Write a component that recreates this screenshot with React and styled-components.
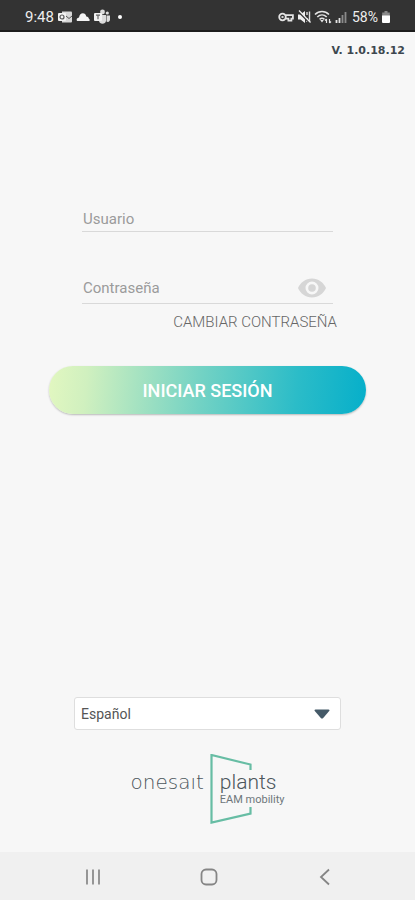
import React, { useState } from 'react';
import styled, { createGlobalStyle } from 'styled-components';

const App = () => {
  const [visible, setVisible] = useState(false);

  return (
    <>
      <GlobalStyle />
      <Screen>
        <StatusBar>
          <StatusGroup>
            <Clock>9:48</Clock>
            <OutlookIcon />
            <CloudIcon />
            <TeamsIcon />
            <Dot />
          </StatusGroup>
          <StatusGroup $tight>
            <KeyIcon />
            <MuteIcon />
            <WifiIcon />
            <SignalIcon />
            <Battery>58%</Battery>
            <BatteryIcon />
          </StatusGroup>
        </StatusBar>

        <Version>V. 1.0.18.12</Version>

        <LoginForm onSubmit={(e) => e.preventDefault()}>
          <Fields>
            <Field>
              <FieldInput type='text' placeholder='Usuario' aria-label='Usuario' />
            </Field>
            <Field $password>
              <FieldInput type={visible ? 'text' : 'password'} placeholder='Contraseña' aria-label='Contraseña' />
              <EyeButton type='button' aria-label='Mostrar contraseña' onClick={() => setVisible(!visible)}>
                <EyeIcon />
              </EyeButton>
            </Field>
          </Fields>
          <ChangeLink href='#'>CAMBIAR CONTRASEÑA</ChangeLink>
          <LoginButton type='submit'>INICIAR SESIÓN</LoginButton>
        </LoginForm>

        <Footer>
          <LanguageBox>
            <LanguageSelect aria-label='Idioma' defaultValue='es'>
              <option value='es'>Español</option>
              <option value='en'>English</option>
            </LanguageSelect>
            <ArrowIcon />
          </LanguageBox>
          <Logo />
        </Footer>

        <NavBar>
          <NavButton type='button' aria-label='Recientes'>
            <svg width='18' height='18' viewBox='0 0 18 18' stroke='#8c8c8c' strokeWidth='1.8'>
              <path d='M3 1.5v15M9 1.5v15M15 1.5v15' />
            </svg>
          </NavButton>
          <NavButton type='button' aria-label='Inicio'>
            <svg width='18' height='18' viewBox='0 0 18 18' fill='none' stroke='#858585' strokeWidth='1.8'>
              <rect x='1.5' y='1.5' width='15' height='15' rx='4.5' />
            </svg>
          </NavButton>
          <NavButton type='button' aria-label='Atrás'>
            <svg width='18' height='18' viewBox='0 0 18 18' fill='none' stroke='#858585' strokeWidth='1.8'>
              <path d='M13 1.5L5 9l8 7.5' />
            </svg>
          </NavButton>
        </NavBar>
      </Screen>
    </>
  );
};

export default App;

const OutlookIcon = () => (
  <svg width='14' height='14' viewBox='0 0 14 14'>
    <path d='M4 1.5h9a1 1 0 0 1 1 1v9a1 1 0 0 1-1 1H4z' fill='#d8d8d8' />
    <rect x='0' y='3' width='8' height='8' rx='1' fill='#f2f2f2' />
    <circle cx='4' cy='7' r='2' fill='none' stroke='#555' strokeWidth='1.2' />
    <path d='M8 6l3 2.5L14 6' fill='none' stroke='#555' />
  </svg>
);

const CloudIcon = () => (
  <svg width='14' height='14' viewBox='0 0 14 14'>
    <path d='M1 11C0 9.500 1 7.800 3 7.500 3.600 4.500 5 3.200 6.800 3.200c1.900 0 3 1.200 3.500 3.200 1.600.1 2.500 1 2.600 2.300.9.400 1.100 1.700.4 2.300z' fill='#f4f4f4' />
  </svg>
);

const TeamsIcon = () => (
  <svg width='16' height='16' viewBox='0 0 16 16' fill='#dcdcdc'>
    <circle cx='8.5' cy='3' r='2.4' />
    <circle cx='13.3' cy='4' r='1.6' />
    <path d='M5 6h7v6a3.6 3.6 0 0 1-7 0zM12.500 6.500H16V11a2.3 2.3 0 0 1-3.500 1.500z' />
    <rect x='0' y='4' width='8' height='8' rx='1' fill='#f2f2f2' />
    <path d='M2 6.200h4M4 6.200v4' stroke='#666' strokeWidth='1.2' />
  </svg>
);

const KeyIcon = () => (
  <svg width='16' height='14' viewBox='0 0 16 14' fill='none' stroke='#e4e4e4' strokeWidth='1.8'>
    <circle cx='4.5' cy='7' r='3.3' />
    <path d='M7.500 5.200h7.400v3.400h-1.500v2h-3v-2H7.500' />
    <path d='M3.500 7h2' />
  </svg>
);

const MuteIcon = () => (
  <svg width='14' height='14' viewBox='0 0 14 14'>
    <path d='M1 4.500h2.500L8 1v12L3.500 9.500H1z' fill='#f0f0f0' />
    <path d='M10 2v3M10 8v4M12.500 1.500v11' stroke='#e0e0e0' strokeWidth='1.4' />
    <path d='M1 1l12 12' stroke='#333' strokeWidth='2' />
    <path d='M2 .5l11.500 12' stroke='#f0f0f0' strokeWidth='1.2' />
  </svg>
);

const WifiIcon = () => (
  <svg width='18' height='14' viewBox='0 0 18 14' fill='none' stroke='#e4e4e4' strokeWidth='1.6'>
    <path d='M1 4.500c4-4 10-4 14 0M3.300 7c2.800-2.700 6.600-2.700 9.400 0M5.600 9.300c1.500-1.300 3.300-1.300 4.800 0' />
    <path d='M6.200 10h3.600L8 12.500z' fill='#e4e4e4' stroke='none' />
    <path d='M12.500 13V9M11 10.500L12.500 9M15.500 9v4M17 11.500L15.500 13' strokeWidth='1.2' />
  </svg>
);

const SignalIcon = () => (
  <svg width='12' height='14' viewBox='0 0 12 14' strokeWidth='1.8'>
    <path d='M1.500 13v-3M4.500 13V8' stroke='#e4e4e4' />
    <path d='M7.500 13V5M10.500 13V2' stroke='#8a8a8a' />
  </svg>
);

const BatteryIcon = () => (
  <svg width='10' height='14' viewBox='0 0 10 14'>
    <path d='M3.500 1h3v1.500h2.300v4H1.200v-4h2.300z' fill='#8a8a8a' />
    <path d='M1 5.500h8V12a1 1 0 0 1-1 1H2a1 1 0 0 1-1-1z' fill='#fff' />
  </svg>
);

const EyeIcon = () => (
  <svg width='28' height='20' viewBox='0 0 28 20'>
    <path
      d='M14 .5C7.700.5 2.400 4.400 0 10c2.400 5.600 7.700 9.500 14 9.500S25.600 15.600 28 10C25.600 4.400 20.300.5 14 .5zm0 16a6.500 6.500 0 1 1 0-13 6.500 6.500 0 0 1 0 13z'
      fill='#d6d6d6'
    />
    <circle cx='14' cy='10' r='3.8' fill='#d6d6d6' />
  </svg>
);

const ArrowIcon = () => (
  <svg width='16' height='10' viewBox='0 0 16 10'>
    <path d='M1.500.5h13c1 0 1.300.9.700 1.600L9.200 9c-.7.700-1.700.7-2.400 0L.8 2.100C.2 1.400.5.500 1.500.5z' fill='#455a68' />
  </svg>
);

const Logo = () => (
  <LogoRow>
    <Brand>onesaıt</Brand>
    <Product>
      <Frame viewBox='0 0 42 70'>
        <path d='M40.500 16V10.500L1.500 1v67.500l39-9V53' fill='none' stroke='#67bda4' strokeWidth='2.2' />
      </Frame>
      <ProductName>plants</ProductName>
      <ProductSub>EAM mobility</ProductSub>
    </Product>
  </LogoRow>
);

const GlobalStyle = createGlobalStyle`
  * {
    box-sizing: border-box;
  }
  body {
    margin: 0;
    background: #f7f7f7;
    font-family: Roboto, 'Open Sans', sans-serif;
  }
  input, button, select {
    font-family: inherit;
  }
`;

const Screen = styled.div`
  display: flex;
  flex-direction: column;
  min-height: 100vh;
  background: #f7f7f7;
`;

const StatusBar = styled.header`
  display: flex;
  align-items: center;
  justify-content: space-between;
  height: 32px;
  padding: 4px 24px 0 25px;
  background: #333;
  border-bottom: 2px solid #1c1c1c;
`;

const StatusGroup = styled.div`
  display: flex;
  align-items: center;
  gap: ${(props) => (props.$tight ? '3px' : '4px')};
`;

const Clock = styled.span`
  color: #eee;
  font-size: 15px;
`;

const Battery = styled.span`
  margin-left: 2px;
  color: #eee;
  font-size: 14px;
`;

const Dot = styled.i`
  width: 4px;
  height: 4px;
  margin-left: 4px;
  border-radius: 50%;
  background: #fff;
`;

const Version = styled.div`
  padding: 11px 10px 0;
  color: #3d474f;
  font-family: 'DejaVu Sans', sans-serif;
  font-size: 11px;
  font-weight: 700;
  line-height: 16px;
  text-align: right;
`;

const LoginForm = styled.form`
  display: flex;
  flex-direction: column;
  padding: 147px 49px 0;
`;

const Fields = styled.div`
  display: flex;
  flex-direction: column;
  gap: 40px;
  padding: 0 33px;
`;

const Field = styled.div`
  display: flex;
  align-items: center;
  height: ${(props) => (props.$password ? '32px' : '26px')};
  border-bottom: 1px solid #d9d9d9;
`;

const FieldInput = styled.input`
  flex: 1;
  min-width: 0;
  padding: 0 1px;
  border: 0;
  outline: 0;
  background: transparent;
  color: #555;
  font-size: 15px;
  line-height: 20px;
  &::placeholder {
    color: #9b9b9b;
    opacity: 1;
  }
`;

const EyeButton = styled.button`
  display: flex;
  margin-right: 7px;
  padding: 0;
  border: 0;
  background: none;
`;

const ChangeLink = styled.a`
  align-self: flex-end;
  margin: 8px 29px 0 0;
  color: #666;
  font-size: 15px;
  font-weight: 300;
  line-height: 20px;
  text-decoration: none;
`;

const LoginButton = styled.button`
  height: 48px;
  margin-top: 34px;
  border: 0;
  border-radius: 24px;
  background: linear-gradient(95deg, #e2f7c0 0%, #d0f0bf 12%, #72d2c4 48%, #2bbcc8 78%, #06afca 100%);
  box-shadow: 0 1px 2px rgba(0, 0, 0, 0.25);
  color: #fff;
  font-size: 18px;
  font-weight: 500;
`;

const Footer = styled.footer`
  display: flex;
  flex-direction: column;
  align-items: center;
  gap: 24px;
  margin-top: auto;
  padding: 0 74px 28px;
`;

const LanguageBox = styled.div`
  display: flex;
  align-items: center;
  width: 100%;
  height: 33px;
  padding-right: 10px;
  border: 1px solid #dedede;
  border-radius: 3px;
  background: #fff;
`;

const LanguageSelect = styled.select`
  flex: 1;
  height: 100%;
  padding: 0 6px;
  border: 0;
  appearance: none;
  background: transparent;
  color: #555;
  font-size: 14px;
`;

const LogoRow = styled.div`
  display: flex;
  align-items: flex-start;
  gap: 6px;
`;

const Brand = styled.div`
  padding-top: 16px;
  color: #4c565c;
  font-family: 'DejaVu Sans Light', 'DejaVu Sans', sans-serif;
  font-size: 20px;
  font-weight: 200;
  line-height: 24px;
`;

const Product = styled.div`
  position: relative;
  display: flex;
  flex-direction: column;
  height: 70px;
  padding: 16px 0 0 10px;
`;

const Frame = styled.svg`
  position: absolute;
  top: 0;
  left: 0;
  width: 42px;
  height: 70px;
`;

const ProductName = styled.span`
  color: #4c565c;
  font-size: 21px;
  font-weight: 300;
  line-height: 24px;
`;

const ProductSub = styled.span`
  color: #6d767a;
  font-size: 11px;
  line-height: 12px;
`;

const NavBar = styled.nav`
  display: flex;
  align-items: center;
  justify-content: space-between;
  height: 48px;
  padding: 2px 77px 0 80px;
  background: #f0f0f0;
`;

const NavButton = styled.button`
  display: flex;
  padding: 4px;
  border: 0;
  background: none;
`;
